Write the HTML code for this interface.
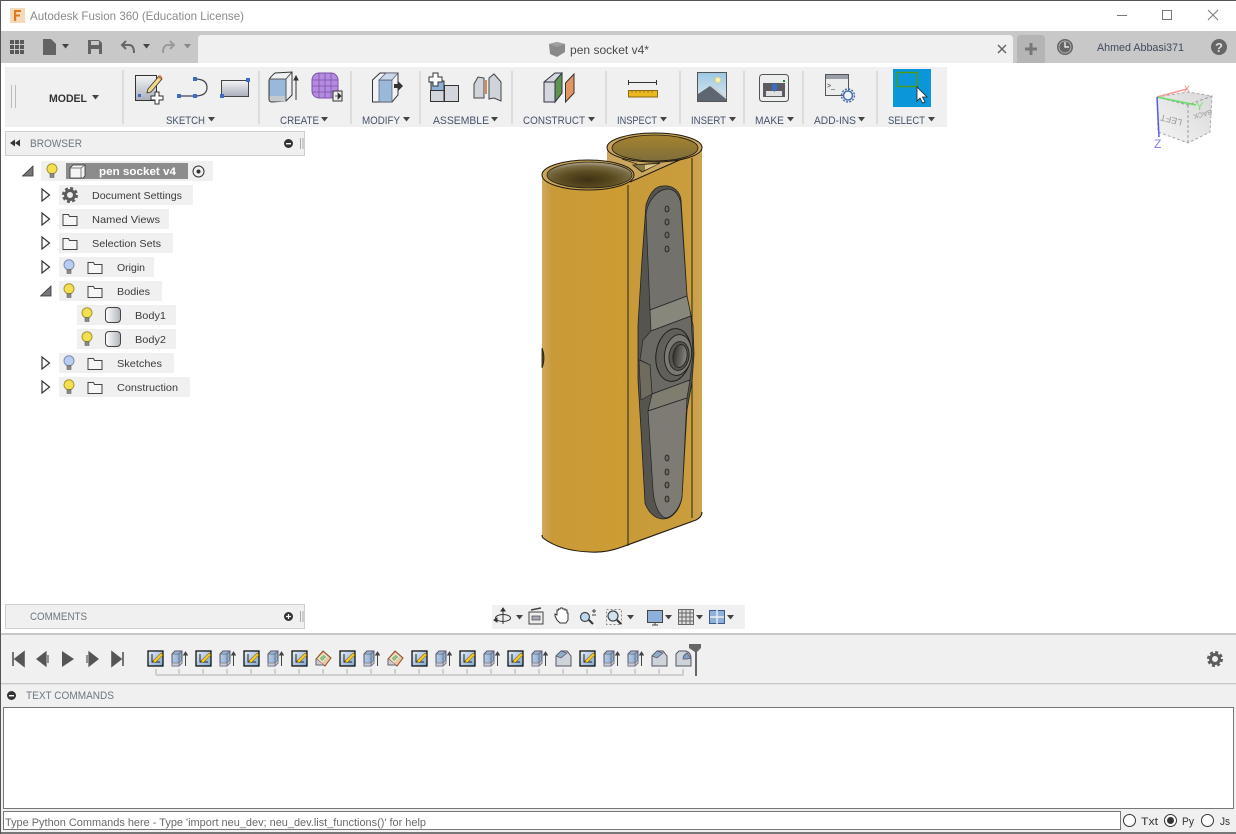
<!DOCTYPE html>
<html><head><meta charset="utf-8"><style>
html,body{margin:0;padding:0;background:#fff;width:1236px;height:834px;overflow:hidden}
svg{display:block}
text{font-family:"Liberation Sans",sans-serif;font-size:11px;fill:#444}
.tb{fill:#44536a;font-size:11px}
.tr{fill:#3a3a3a;font-size:10.5px}
.hd{fill:#6d7682;font-size:11px}
</style></head><body>
<svg width="1236" height="834" viewBox="0 0 1236 834" xmlns="http://www.w3.org/2000/svg">
<defs>
<linearGradient id="body" x1="0" x2="1" y1="0" y2="0"><stop offset="0" stop-color="#cfaa60"/><stop offset=".06" stop-color="#c99a38"/><stop offset=".5" stop-color="#cd9c33"/><stop offset=".55" stop-color="#c89a3a"/><stop offset=".9" stop-color="#c99c3c"/><stop offset="1" stop-color="#cda552"/></linearGradient>
<radialGradient id="cup1" cx=".48" cy=".68" r=".62"><stop offset="0" stop-color="#3f3114"/><stop offset=".5" stop-color="#5c4c22"/><stop offset=".85" stop-color="#7a6c44"/><stop offset="1" stop-color="#a09478"/></radialGradient>
<linearGradient id="cup2" x1="0" x2="0" y1="0" y2="1"><stop offset="0" stop-color="#a6842f"/><stop offset=".6" stop-color="#8e7636"/><stop offset="1" stop-color="#7d6e3a"/></linearGradient>
<linearGradient id="blue" x1="0" x2="1" y1="0" y2="0"><stop offset="0" stop-color="#b7cce4"/><stop offset="1" stop-color="#84a5cc"/></linearGradient>
<linearGradient id="gr" x1="0" x2="0" y1="0" y2="1"><stop offset="0" stop-color="#f4f4f6"/><stop offset="1" stop-color="#a9aebb"/></linearGradient>
<linearGradient id="cylg" x1="0" x2="1" y1="0" y2="0"><stop offset="0" stop-color="#fff"/><stop offset="1" stop-color="#b0b4ba"/></linearGradient>
<linearGradient id="sk" x1="0" x2="1" y1="0" y2="1"><stop offset="0" stop-color="#e8eef5"/><stop offset="1" stop-color="#7ea5d4"/></linearGradient>
<linearGradient id="sky" x1="0" x2="0" y1="0" y2="1"><stop offset="0" stop-color="#9cc8e4"/><stop offset="1" stop-color="#dfe8ec"/></linearGradient>
<linearGradient id="hole" x1="0" x2="1" y1="0" y2="0"><stop offset="0" stop-color="#34342e"/><stop offset="1" stop-color="#8b8a80"/></linearGradient>
<linearGradient id="cubeg" x1="0" x2="1" y1="1" y2="0"><stop offset="0" stop-color="#f4f4f4"/><stop offset="1" stop-color="#d8d8d8"/></linearGradient>
<symbol id="bulbY" viewBox="0 0 14 16" width="14" height="16"><circle cx="7" cy="5.800" r="5" fill="#f3e04f" stroke="#a8962f"/><rect x="5" y="10.500" width="4" height="4" fill="#8a8a80" stroke="#666" stroke-width=".6"/></symbol>
<symbol id="bulbB" viewBox="0 0 14 16" width="14" height="16"><circle cx="7" cy="5.800" r="5" fill="#b9cdf0" stroke="#7a8db0"/><rect x="5" y="10.500" width="4" height="4" fill="#8a8a80" stroke="#666" stroke-width=".6"/></symbol>
<symbol id="fold" viewBox="0 0 16 14" width="16" height="14"><path d="M1 12.500V1.500h5.500l1 2H15v9z" fill="#f6f6f6" stroke="#444"/></symbol>
<symbol id="cylb" viewBox="0 0 18 18" width="18" height="18"><rect x="1.500" y="1.500" width="15" height="15" rx="3.500" fill="url(#cylg)" stroke="#444"/></symbol>
<symbol id="tri" viewBox="0 0 10 14" width="10" height="14"><path d="M1 1L8.500 7L1 13z" fill="#fff" stroke="#333" stroke-width="1.200"/></symbol>
<symbol id="opn" viewBox="0 0 12 12" width="12" height="12"><path d="M0.500 11L11 1v10z" fill="#777" stroke="#333" stroke-width=".8"/></symbol>
<symbol id="sk1" viewBox="0 0 17 17" width="17" height="17"><rect x="1" y="1" width="15" height="15" fill="url(#sk)" stroke="#000" stroke-width="1.200"/><path d="M5 4v8h8" stroke="#222" fill="none"/><path d="M6 11L14 3l2 2-8 8z" fill="#f3cd28" stroke="#8a6a10" stroke-width=".6"/></symbol>
<symbol id="ex1" viewBox="0 0 17 17" width="17" height="17"><path d="M1 4l3-3h7v12l-3 3H1z" fill="url(#blue)" stroke="#556"/><path d="M1 13h7l3-3v3l-3 3H1z" fill="#c9ccd4" stroke="#778" stroke-width=".7"/><path d="M1 4h7l3-3M8 4v12" fill="none" stroke="#667" stroke-width=".8"/><path d="M14.500 16V3M12.600 5l1.900-3 1.900 3z" stroke="#444" fill="#444"/></symbol>
<symbol id="dm1" viewBox="0 0 17 17" width="17" height="17"><path d="M8 1l8 7-6 8L1 9z" fill="#eac4a4" stroke="#8a4a20"/><path d="M4 8l5-4 3 3-5 5z" fill="#8fbf84" stroke="#fff" stroke-width=".6"/><path d="M1 9v6h8" fill="#ccd" stroke="#666"/></symbol>
<symbol id="ch1" viewBox="0 0 17 17" width="17" height="17"><path d="M6 1h6l4 5v10H1V6z" fill="#cfd3da" stroke="#556"/><path d="M1 6l5-5 6 2-6 5z" fill="#90aac8" stroke="#556" stroke-width=".7"/></symbol>
<symbol id="fl1" viewBox="0 0 17 17" width="17" height="17"><path d="M1 4l3-3h7q5 2 5 7v8H1z" fill="#cfd3da" stroke="#556"/><path d="M8 9q0-4 4-6l4 5-4 1z" fill="#7e9fc6" stroke="#556" stroke-width=".7"/></symbol>
<symbol id="arr" viewBox="0 0 7 5" width="7" height="5"><path d="M0 0h7L3.500 4.500z" fill="#444"/></symbol>
</defs>

<rect width="1236" height="834" fill="#fff"/>
<rect x="0" y="0" width="1236" height="1" fill="#555"/>
<rect x="0" y="0" width="1" height="834" fill="#555"/>

<!-- title bar -->
<rect x="10" y="8" width="15" height="15" fill="#f6d9b8"/>
<path d="M14 10h7v2h-4.800v2.500h3.800v2h-3.800V21H14z" fill="#e07a1c"/>
<text x="30" y="20" style="font-size:12px;fill:#8a8a8a" textLength="214" lengthAdjust="spacingAndGlyphs">Autodesk Fusion 360 (Education License)</text>
<path d="M1117 15.500h10" stroke="#777" stroke-width="1"/>
<rect x="1162.500" y="10.500" width="9" height="9" fill="none" stroke="#777"/>
<path d="M1208 10l10 10M1218 10l-10 10" stroke="#777" fill="none"/>

<!-- tab bar -->
<rect x="1" y="31" width="1235" height="32" fill="#c8c8c8"/>
<path d="M198 63V39q0-4 4-4H1009q4 0 4 4V63z" fill="#f0f0f0"/>
<g fill="#595959"><rect x="10" y="40" width="4" height="4"/><rect x="15" y="40" width="4" height="4"/><rect x="20" y="40" width="4" height="4"/><rect x="10" y="45" width="4" height="4"/><rect x="15" y="45" width="4" height="4"/><rect x="20" y="45" width="4" height="4"/><rect x="10" y="50" width="4" height="4"/><rect x="15" y="50" width="4" height="4"/><rect x="20" y="50" width="4" height="4"/></g>
<path d="M43 39h8l5 5v11H43z" fill="#636363"/><use href="#arr" x="62" y="44"/>
<path d="M88 40h11l3 3v11H88z" fill="#636363"/><rect x="91" y="41" width="8" height="4" fill="#c8c8c8"/><rect x="91" y="49" width="8" height="5" fill="#c8c8c8"/>
<path d="M122 45h7q5 0 5 8M126 41l-4 4 4 4" fill="none" stroke="#666" stroke-width="2"/><use href="#arr" x="143" y="44"/>
<path d="M174 45h-6q-5 0-5 8M170 41l4 4-4 4" fill="none" stroke="#9a9a9a" stroke-width="2"/><path d="M184 44h7l-3.500 4.500z" fill="#888"/>
<path d="M549 44l8-2 8 2v8l-8 5-7-3z" fill="#8a8a8a"/><path d="M549 44l8 3 8-3-8-2z" fill="#a0a0a0"/>
<text x="570" y="54" style="font-size:12px;fill:#4a4a4a" textLength="79" lengthAdjust="spacingAndGlyphs">pen socket v4*</text>
<path d="M998 45l8 8M1006 45l-8 8" stroke="#666" stroke-width="1.500"/>
<path d="M1017 63V39q0-4 4-4h20q4 0 4 4V63z" fill="#b5b5b5"/>
<path d="M1031 43v12M1025 49h12" stroke="#777" stroke-width="3"/>
<circle cx="1065" cy="47" r="7.500" fill="#666" stroke="#666"/><circle cx="1065" cy="47" r="6" fill="#666" stroke="#c8c8c8" stroke-width=".7"/><path d="M1065 42v5h4" stroke="#fff" fill="none" stroke-width="1.200"/>
<text x="1097" y="51" style="font-size:11px;fill:#3e4a5c" textLength="87" lengthAdjust="spacingAndGlyphs">Ahmed Abbasi371</text>
<circle cx="1219" cy="47" r="8" fill="#666"/><text x="1215" y="52" style="font-size:13px;font-weight:bold;fill:#ddd">?</text>

<!-- toolbar -->
<rect x="5" y="67" width="942" height="60" fill="#f0f0f0"/>
<path d="M11.500 85v23M15.500 85v23" stroke="#bbb"/>
<text x="49" y="102" style="font-size:11px;font-weight:bold;fill:#333" textLength="38" lengthAdjust="spacingAndGlyphs">MODEL</text><use href="#arr" x="92" y="95"/>
<g fill="#dcdcdc"><rect x="122" y="70" width="2" height="54"/><rect x="258" y="71" width="2" height="53"/><rect x="350" y="71" width="2" height="53"/><rect x="419" y="71" width="2" height="53"/><rect x="511" y="71" width="2" height="53"/><rect x="605" y="71" width="2" height="53"/><rect x="679" y="71" width="2" height="53"/><rect x="743" y="71" width="2" height="53"/><rect x="802" y="71" width="2" height="53"/><rect x="876" y="71" width="2" height="53"/></g>
<!-- sketch icons -->
<rect x="135.500" y="75.500" width="21" height="25" fill="url(#gr)" stroke="#333"/>
<rect x="138" y="94" width="3" height="3" fill="#3a6cc8"/>
<path d="M148 89l11-13 3 3-11 13-4 1z" fill="#f3d88a" stroke="#333" stroke-width=".8"/><path d="M158 77l2-2 2.500 2.500-2 2z" fill="#c9753c"/>
<path d="M155 92h4v4h4v4h-4v4h-4v-4h-4v-4h4z" fill="#fff" stroke="#333"/>
<path d="M179 96h16M195 79q12 0 12 8.500t-12 8.500" fill="none" stroke="#444" stroke-width="1.200"/>
<g fill="#3a6cc8"><rect x="177" y="94" width="4" height="4"/><rect x="193" y="94" width="4" height="4"/><rect x="193" y="77" width="4" height="4"/></g>
<rect x="221.500" y="80.500" width="27" height="16" fill="url(#gr)" stroke="#444"/>
<rect x="246" y="78" width="4" height="4" fill="#3a6cc8"/><rect x="220" y="94" width="4" height="4" fill="#3a6cc8"/>
<!-- extrude -->
<path d="M269 80Q270 77 275 73L292 72V95L286 101L272 102Q269 102 269 99Z" fill="#eef0f3" stroke="#333"/>
<path d="M269.500 79H285.500V96H269.500Z" fill="#9ab8da"/>
<path d="M269.500 96H285.500V101.500H272Q269.500 101.500 269.500 99Z" fill="#c5c9d0"/>
<path d="M269.500 79H286V101M286 79L292 72" fill="none" stroke="#333" stroke-width=".8"/>
<path d="M296 100V77M294 80l2-4 2 4z" stroke="#333" fill="#333" stroke-width="1"/>
<rect x="312" y="73" width="26" height="25" rx="7" fill="#b48be0" stroke="#7b52a8"/>
<path d="M312 80h26M312 86h26M312 92h26M319 73v25M325 73v25M331 73v25" stroke="#7b52a8" stroke-width=".8"/>
<rect x="333" y="91" width="9" height="10" fill="#eee" stroke="#333"/><path d="M335 96h3M338 93l3 3-3 3z" fill="#333" stroke="#333" stroke-width=".8"/>
<!-- modify -->
<path d="M372.500 80L380 73H398V95L392 102H372.500Z" fill="#f0f2f5" stroke="#333"/>
<path d="M379 80H392V102H379Z" fill="#9ab8da" stroke="#556" stroke-width=".7"/>
<path d="M379 80L386 73H398L392 80Z" fill="#c8d8ea" stroke="#556" stroke-width=".7"/>
<path d="M394 84h4v-3l5 5-5 5v-3h-4z" fill="#333"/>
<!-- assemble -->
<rect x="431" y="81" width="13" height="10" fill="#8fb0d6" stroke="#333"/><rect x="430.500" y="90.500" width="13.500" height="11" fill="#d2d6dc" stroke="#333"/><rect x="444.500" y="85.500" width="14" height="16" fill="#d2d6dc" stroke="#333"/>
<path d="M433 73h5v4h4v5h-4v4h-5v-4h-4v-5h4z" fill="#fff" stroke="#333"/>
<path d="M474 84l4-7 6 1v20h-10zM489 78l5-4 7 8v19l-7-3-5 1z" fill="#cfd3da" stroke="#444"/><path d="M486 80v14" stroke="#d8641c" stroke-width="1.500"/>
<!-- construct -->
<path d="M544 82l11-9h7v20l-7 9h-11z" fill="#d4d7dd" stroke="#334"/><path d="M555 81l7-8v20l-7 9z" fill="#5f9350" stroke="#334"/><path d="M544 82h11" stroke="#334"/>
<path d="M565.500 102V83l8.500-9v19z" fill="#e39560" stroke="#333"/>
<path d="M628.500 80v5M656.500 80v5M628 82.500h29" stroke="#333" stroke-width="1"/>
<rect x="628.500" y="90.500" width="29" height="6.500" fill="#eab81f" stroke="#8a6a12"/>
<path d="M632 91v2M636 91v2M640 91v2M644 91v2M648 91v2M652 91v2" stroke="#8a6a12" stroke-width=".7"/>
<rect x="697.500" y="72.500" width="29" height="29" fill="url(#sky)" stroke="#555"/><circle cx="718" cy="80" r="2.500" fill="#fff4b8" stroke="#f0d878"/><path d="M698 101V94l12-8 16 13v2z" fill="#5e6672"/><path d="M712 86l14 12" stroke="#c9ced4" stroke-width="1.500"/>
<rect x="759.500" y="74.500" width="29" height="27" rx="3" fill="#eceded" stroke="#555"/><rect x="763" y="83" width="22" height="14" fill="#5a5c62"/><rect x="766" y="91" width="16" height="5" fill="#e0e0e0"/><path d="M772 84h5v5l-2.500 3-2.500-3z" fill="#3a6cc8"/><rect x="783" y="80" width="2" height="2" fill="#178a2c"/>
<rect x="825.500" y="74.500" width="23" height="21" fill="#eceded" stroke="#555"/><rect x="826" y="75" width="22" height="4" fill="#9a9ea8"/><text x="827" y="88" style="font-size:7px;fill:#333">&gt;_</text>
<circle cx="848" cy="95.500" r="4.500" fill="#eef2f8" stroke="#4a6fa8" stroke-width="1.500"/><circle cx="848" cy="95.500" r="6.500" fill="none" stroke="#4a6fa8" stroke-width="1.500" stroke-dasharray="2 1.400"/>
<rect x="893" y="69" width="38" height="38" fill="#0a96d8"/><rect x="897.500" y="72.500" width="20" height="14" fill="none" stroke="#4e9a10" stroke-width="1.400"/>
<path d="M917 87v14l3-3 2.500 5 2.500-1-2.500-5h4.500z" fill="#fff" stroke="#222" stroke-width=".8"/>
<!-- toolbar labels -->
<text class="tb" x="166" y="124" textLength="39" lengthAdjust="spacingAndGlyphs">SKETCH</text><use href="#arr" x="208" y="117"/>
<text class="tb" x="280" y="124" textLength="39" lengthAdjust="spacingAndGlyphs">CREATE</text><use href="#arr" x="321" y="117"/>
<text class="tb" x="362" y="124" textLength="38" lengthAdjust="spacingAndGlyphs">MODIFY</text><use href="#arr" x="403" y="117"/>
<text class="tb" x="433" y="124" textLength="56" lengthAdjust="spacingAndGlyphs">ASSEMBLE</text><use href="#arr" x="491" y="117"/>
<text class="tb" x="523" y="124" textLength="62" lengthAdjust="spacingAndGlyphs">CONSTRUCT</text><use href="#arr" x="588" y="117"/>
<text class="tb" x="617" y="124" textLength="40" lengthAdjust="spacingAndGlyphs">INSPECT</text><use href="#arr" x="660" y="117"/>
<text class="tb" x="691" y="124" textLength="35" lengthAdjust="spacingAndGlyphs">INSERT</text><use href="#arr" x="729" y="117"/>
<text class="tb" x="755" y="124" textLength="29" lengthAdjust="spacingAndGlyphs">MAKE</text><use href="#arr" x="787" y="117"/>
<text class="tb" x="814" y="124" textLength="42" lengthAdjust="spacingAndGlyphs">ADD-INS</text><use href="#arr" x="858" y="117"/>
<text class="tb" x="888" y="124" textLength="37" lengthAdjust="spacingAndGlyphs">SELECT</text><use href="#arr" x="928" y="117"/>

<!-- browser -->
<rect x="5.500" y="131.500" width="299" height="24" fill="#f0f0f0" stroke="#cfcfcf"/>
<path d="M10 143l5-3.500v7zM15 143l5-3.500v7z" fill="#333"/>
<text class="hd" x="30" y="147" textLength="52" lengthAdjust="spacingAndGlyphs">BROWSER</text>
<circle cx="288.500" cy="143.500" r="4.500" fill="#333"/><rect x="286" y="143" width="5" height="1.400" fill="#fff"/>
<path d="M300.500 138v11M303 138v11" stroke="#aaa"/>
<g fill="#f0f0f0"><rect x="41" y="161" width="172" height="20"/><rect x="59" y="185" width="134" height="20"/><rect x="59" y="209" width="110" height="20"/><rect x="59" y="233" width="114" height="20"/><rect x="59" y="257" width="95" height="20"/><rect x="59" y="281" width="103" height="20"/><rect x="77" y="305" width="99" height="20"/><rect x="77" y="329" width="99" height="20"/><rect x="59" y="353" width="115" height="20"/><rect x="59" y="377" width="131" height="20"/></g>
<use href="#opn" x="22" y="165"/><use href="#bulbY" x="45" y="163"/>
<rect x="66" y="163" width="122" height="16" fill="#8c8c8c"/>
<path d="M70 168l3-3h12v11l-2 2H70z" fill="#f4f4f4" stroke="#333" stroke-width=".8"/><path d="M70 168h11v10M81 168l4-3" fill="none" stroke="#555" stroke-width=".7"/>
<text x="99" y="175" style="font-size:11px;font-weight:bold;fill:#fff" textLength="77" lengthAdjust="spacingAndGlyphs">pen socket v4</text>
<circle cx="198.500" cy="171.500" r="5.500" fill="#f0f0f0" stroke="#333"/><circle cx="198.500" cy="171.500" r="2" fill="#333"/>
<use href="#tri" x="41" y="188"/><circle cx="70" cy="195" r="4.500" fill="none" stroke="#5c5c5c" stroke-width="3"/><circle cx="70" cy="195" r="6.800" fill="none" stroke="#5c5c5c" stroke-width="2.400" stroke-dasharray="3 2.340"/>
<text class="tr" x="92" y="199" textLength="90" lengthAdjust="spacingAndGlyphs">Document Settings</text>
<use href="#tri" x="41" y="212"/><use href="#fold" x="62" y="213"/><text class="tr" x="92" y="223" textLength="68" lengthAdjust="spacingAndGlyphs">Named Views</text>
<use href="#tri" x="41" y="236"/><use href="#fold" x="62" y="237"/><text class="tr" x="92" y="247" textLength="69" lengthAdjust="spacingAndGlyphs">Selection Sets</text>
<use href="#tri" x="41" y="260"/><use href="#bulbB" x="62" y="259"/><use href="#fold" x="87" y="261"/><text class="tr" x="117" y="271" textLength="28" lengthAdjust="spacingAndGlyphs">Origin</text>
<use href="#opn" x="40" y="285"/><use href="#bulbY" x="62" y="283"/><use href="#fold" x="87" y="285"/><text class="tr" x="117" y="295" textLength="33" lengthAdjust="spacingAndGlyphs">Bodies</text>
<use href="#bulbY" x="80" y="307"/><use href="#cylb" x="104" y="306"/><text class="tr" x="135" y="319" textLength="31" lengthAdjust="spacingAndGlyphs">Body1</text>
<use href="#bulbY" x="80" y="331"/><use href="#cylb" x="104" y="330"/><text class="tr" x="135" y="343" textLength="31" lengthAdjust="spacingAndGlyphs">Body2</text>
<use href="#tri" x="41" y="356"/><use href="#bulbB" x="62" y="355"/><use href="#fold" x="87" y="357"/><text class="tr" x="117" y="367" textLength="45" lengthAdjust="spacingAndGlyphs">Sketches</text>
<use href="#tri" x="41" y="380"/><use href="#bulbY" x="62" y="379"/><use href="#fold" x="87" y="381"/><text class="tr" x="117" y="391" textLength="61" lengthAdjust="spacingAndGlyphs">Construction</text>

<!-- comments -->
<rect x="5.500" y="604.500" width="299" height="24" fill="#f0f0f0" stroke="#cfcfcf"/>
<text class="hd" x="30" y="620" textLength="57" lengthAdjust="spacingAndGlyphs">COMMENTS</text>
<circle cx="288.500" cy="616.500" r="4.500" fill="#333"/><path d="M286 616.500h5M288.500 614v5" stroke="#fff" stroke-width="1.200"/>
<path d="M300.500 611v11M303 611v11" stroke="#aaa"/>

<!-- model -->
<path d="M542 175L607 175L607 147L702 147V512Q702 517 696 520L622 547Q606 553 590 552Q560 551 543 538Q542 537 542 535Z" fill="url(#body)"/>
<path d="M542 535Q542 537 543 538Q560 551 590 552Q606 553 622 547L696 520Q702 517 702 512" fill="none" stroke="#1f1a10" stroke-width="1.100"/>
<path d="M628 185V546M692 158V518" stroke="#2a2414" stroke-width="1"/>
<path d="M607 148L702 148V150L630 182L610 175L607 160Z" fill="#cba75e"/>
<path d="M630 182L702 150" stroke="#1f1a10" stroke-width="1"/>
<ellipse cx="654.500" cy="147.500" rx="47.500" ry="14.500" fill="#c9a45a" stroke="#1f1a10" stroke-width="1"/>
<ellipse cx="655" cy="148" rx="43" ry="13" fill="url(#cup2)" stroke="#1f1a10" stroke-width=".8"/>
<path d="M633 165L660 163L642 172Z" fill="#8a7a48" stroke="#1f1a10" stroke-width=".8"/><path d="M645 165L658 164L645 170Z" fill="#e0c88a"/>
<path d="M622 159L637 164" stroke="#1f1a10" stroke-width=".7"/>
<ellipse cx="588" cy="175" rx="46" ry="15" fill="#c9a45a" stroke="#1f1a10" stroke-width="1"/>
<ellipse cx="589.500" cy="175" rx="42.500" ry="13" fill="url(#cup1)" stroke="#2a2414" stroke-width=".8"/>
<path d="M542 348q4 10 0 20z" fill="#5c4c20" stroke="#1f1a10" stroke-width=".8"/>
<!-- horn -->
<path d="M646 205C650 192 656 186 663 186C674 185 680 192 681 200L687 296L693 325L694 354L692 382L687 410L682 497C680 510 672 519 663 519C655 519 648 512 645 503L641 430L638 380L638 325L642 260Z" fill="#55544f" stroke="#222" stroke-width=".8"/>
<path d="M646 214C648 200 658 189 668 189C676 189 681 198 681 207L687 296L650 310Z" fill="#72716b" stroke="#222" stroke-width=".7"/>
<path d="M650 310L687 296L691 316L651 331Z" fill="#87877c" stroke="#222" stroke-width=".7"/>
<path d="M651 331L691 316L693 354L690 380L652 394L650 365L640 360L643 340Z" fill="#6a6963" stroke="#222" stroke-width=".7"/>
<path d="M639 360L650 365L652 394L641 400Z" fill="#6f6b5f" stroke="#222" stroke-width=".6"/>
<path d="M652 394L690 380L687 398L648 411Z" fill="#7f7c70" stroke="#222" stroke-width=".7"/>
<path d="M648 411L687 398L682 497C680 508 672 518 665 518C659 515 654 505 653 490Z" fill="#7d7b73" stroke="#222" stroke-width=".7"/>
<ellipse cx="673.500" cy="355" rx="17.500" ry="26.500" transform="rotate(8 673.500 355)" fill="#605f59" stroke="#1f1f1a" stroke-width="1"/>
<ellipse cx="678" cy="355" rx="13.500" ry="20.500" transform="rotate(8 678 355)" fill="#7b7a72" stroke="#1f1f1a" stroke-width=".9"/>
<ellipse cx="679" cy="356" rx="10" ry="14.500" transform="rotate(8 679 356)" fill="#55544e" stroke="#1f1f1a" stroke-width=".8"/>
<ellipse cx="680" cy="356" rx="7" ry="11.500" transform="rotate(8 680 356)" fill="url(#hole)" stroke="#1f1f1a" stroke-width=".8"/>
<g fill="#6a6962" stroke="#1f1f1a" stroke-width=".8"><ellipse cx="667" cy="209" rx="2" ry="3"/><ellipse cx="667" cy="222" rx="2" ry="3"/><ellipse cx="667" cy="235" rx="2" ry="3"/><ellipse cx="667" cy="249" rx="2" ry="3"/><ellipse cx="667" cy="458" rx="2" ry="3"/><ellipse cx="667" cy="472" rx="2" ry="3"/><ellipse cx="667" cy="485" rx="2" ry="3"/><ellipse cx="667" cy="499" rx="2" ry="3"/></g>

<!-- view cube -->
<path d="M1157 97l31-5 24 4-2 36-22 11-30-11z" fill="url(#cubeg)"/>
<path d="M1157 97l31 8 24-9M1188 105v38" fill="none" stroke="#999" stroke-dasharray="3 2" stroke-width="1"/>
<path d="M1157 97l31-5 24 4-2 36-22 11-30-11z" fill="none" stroke="#aaa" stroke-dasharray="3 2"/>
<text transform="translate(1172 117) rotate(195)" text-anchor="middle" style="font-size:9px;fill:#999">LEFT</text>
<text transform="translate(1202 112) rotate(165)" text-anchor="middle" style="font-size:7px;fill:#999">BACK</text>
<path d="M1157 97l30-8" stroke="#f49a9a" stroke-width="1.500"/><path d="M1157 97l39 8" stroke="#66dd66" stroke-width="1.500"/><path d="M1157 97l2 40" stroke="#5a5af0" stroke-width="1.500"/>
<text x="1184" y="92" style="font-size:9px;fill:#f08a8a">X</text><text x="1196" y="110" style="font-size:11px;fill:#70e070">Y</text><text x="1154" y="148" style="font-size:12px;fill:#7a7af0">Z</text>

<!-- nav bar -->
<rect x="492" y="605" width="253" height="24" fill="#f0f0f0"/>
<ellipse cx="503" cy="618" rx="7.500" ry="3.500" fill="none" stroke="#333"/><path d="M503 610v14M501 611l2-3 2 3zM497 618l-3 2 3 2z" fill="#333" stroke="#333"/><use href="#arr" x="516" y="615"/>
<rect x="529" y="612" width="14" height="12" fill="#eee" stroke="#444"/><rect x="532" y="616" width="8" height="4" fill="#aab" stroke="#444" stroke-width=".7"/><path d="M531 610l10-2" stroke="#444" stroke-width="1.500"/>
<path d="M557 620l-2-4v-2l2 1v-5h1.500v-1h1.500l.5-1h2l.5 1h2v1h2v3h1v7l-2 3h-6z" fill="#fff" stroke="#333"/>
<circle cx="585" cy="617" r="4.500" fill="#bcd8f0" stroke="#444" stroke-width="1.200"/><path d="M589 620l4 4" stroke="#333" stroke-width="2"/><path d="M592 611h4M594 609v4M592 615h4" stroke="#444"/>
<rect x="606.500" y="609.500" width="15" height="15" fill="none" stroke="#888" stroke-dasharray="2 2"/><circle cx="613" cy="616" r="5" fill="#cfe2f2" stroke="#444" stroke-width="1.200"/><path d="M617 620l4 4" stroke="#333" stroke-width="2"/><use href="#arr" x="627" y="615"/>
<rect x="647.500" y="610.500" width="15" height="12" fill="#8fb0d8" stroke="#444"/><path d="M652 625h6M655 623v2" stroke="#444"/><use href="#arr" x="665" y="615"/>
<rect x="678.500" y="609.500" width="15" height="15" fill="#ddd" stroke="#666"/><path d="M682 610v14M686 610v14M690 610v14M679 613h14M679 617h14M679 621h14" stroke="#666"/><use href="#arr" x="696" y="615"/>
<rect x="709.500" y="610.500" width="15" height="13" fill="#8fb0d8" stroke="#3a5a8a"/><path d="M717 610v14M710 617h14" stroke="#f0f0f0" stroke-width="1.400"/><use href="#arr" x="727" y="615"/>

<!-- timeline -->
<rect x="1" y="633" width="1235" height="2" fill="#c8c8c8"/>
<rect x="1" y="635" width="1235" height="48" fill="#f0f0f0"/>
<path d="M13 652v14M15 659l9-7v14z" fill="#555" stroke="#555" stroke-width="1.600"/>
<path d="M37 659l9-7v14zM48 655v8" fill="#555" stroke="#555" stroke-width="1.200"/>
<path d="M62 651l12 8-12 8z" fill="#555"/>
<path d="M98 659l-9-7v14zM87 655v8" fill="#555" stroke="#555" stroke-width="1.200"/>
<path d="M123 652v14M121 659l-9-7v14z" fill="#555" stroke="#555" stroke-width="1.600"/>
<rect x="156" y="674" width="528" height="2" fill="#cfcfcf"/>
<g fill="#cfcfcf"><rect x="155" y="669" width="2" height="6"/><rect x="178" y="669" width="2" height="6"/><rect x="202" y="669" width="2" height="6"/><rect x="226" y="669" width="2" height="6"/><rect x="250" y="669" width="2" height="6"/><rect x="274" y="669" width="2" height="6"/><rect x="298" y="669" width="2" height="6"/><rect x="322" y="669" width="2" height="6"/><rect x="346" y="669" width="2" height="6"/><rect x="370" y="669" width="2" height="6"/><rect x="394" y="669" width="2" height="6"/><rect x="418" y="669" width="2" height="6"/><rect x="442" y="669" width="2" height="6"/><rect x="466" y="669" width="2" height="6"/><rect x="490" y="669" width="2" height="6"/><rect x="514" y="669" width="2" height="6"/><rect x="538" y="669" width="2" height="6"/><rect x="562" y="669" width="2" height="6"/><rect x="586" y="669" width="2" height="6"/><rect x="610" y="669" width="2" height="6"/><rect x="634" y="669" width="2" height="6"/><rect x="658" y="669" width="2" height="6"/><rect x="682" y="669" width="2" height="6"/></g>
<use href="#sk1" x="147" y="650"/><use href="#ex1" x="171" y="650"/><use href="#sk1" x="195" y="650"/><use href="#ex1" x="219" y="650"/><use href="#sk1" x="243" y="650"/><use href="#ex1" x="267" y="650"/><use href="#sk1" x="291" y="650"/><use href="#dm1" x="315" y="650"/><use href="#sk1" x="339" y="650"/><use href="#ex1" x="363" y="650"/><use href="#dm1" x="387" y="650"/><use href="#sk1" x="411" y="650"/><use href="#ex1" x="435" y="650"/><use href="#sk1" x="459" y="650"/><use href="#ex1" x="483" y="650"/><use href="#sk1" x="507" y="650"/><use href="#ex1" x="531" y="650"/><use href="#ch1" x="555" y="650"/><use href="#sk1" x="579" y="650"/><use href="#ex1" x="603" y="650"/><use href="#ex1" x="627" y="650"/><use href="#ch1" x="651" y="650"/><use href="#fl1" x="675" y="650"/>
<path d="M689 644h12v4l-4 4v24h-2V652l-6-4z" fill="#666"/>
<circle cx="1215" cy="659" r="4.500" fill="none" stroke="#5c5c5c" stroke-width="3"/><circle cx="1215" cy="659" r="6.800" fill="none" stroke="#5c5c5c" stroke-width="2.400" stroke-dasharray="3 2.340"/>

<!-- text commands -->
<rect x="1" y="683" width="1235" height="1.500" fill="#c8c8c8"/>
<rect x="1" y="685" width="1235" height="149" fill="#f0f0f0"/>
<circle cx="11.500" cy="695.500" r="4.500" fill="#333"/><rect x="9" y="695" width="5" height="1.400" fill="#fff"/>
<text class="hd" x="26" y="699" textLength="88" lengthAdjust="spacingAndGlyphs">TEXT COMMANDS</text>
<rect x="3.500" y="707.500" width="1230" height="101" fill="#fff" stroke="#777"/>
<rect x="3.500" y="811.500" width="1117" height="18" fill="#fff" stroke="#777"/>
<text x="5" y="826" style="font-size:11px;fill:#6a6a6a" textLength="421" lengthAdjust="spacingAndGlyphs">Type Python Commands here - Type 'import neu_dev; neu_dev.list_functions()' for help</text>
<circle cx="1129.500" cy="820.500" r="6" fill="#fff" stroke="#333"/>
<text x="1141" y="825" style="font-size:11px;fill:#333" textLength="17" lengthAdjust="spacingAndGlyphs">Txt</text>
<circle cx="1170.500" cy="820.500" r="6" fill="#fff" stroke="#333"/><circle cx="1170.500" cy="820.500" r="3.500" fill="#333"/>
<text x="1182" y="825" style="font-size:11px;fill:#333" textLength="12" lengthAdjust="spacingAndGlyphs">Py</text>
<circle cx="1207.500" cy="820.500" r="6" fill="#fff" stroke="#333"/>
<text x="1220" y="825" style="font-size:11px;fill:#333" textLength="10" lengthAdjust="spacingAndGlyphs">Js</text>
<rect x="1" y="832" width="1235" height="2" fill="#777"/>
</svg>
</body></html>
